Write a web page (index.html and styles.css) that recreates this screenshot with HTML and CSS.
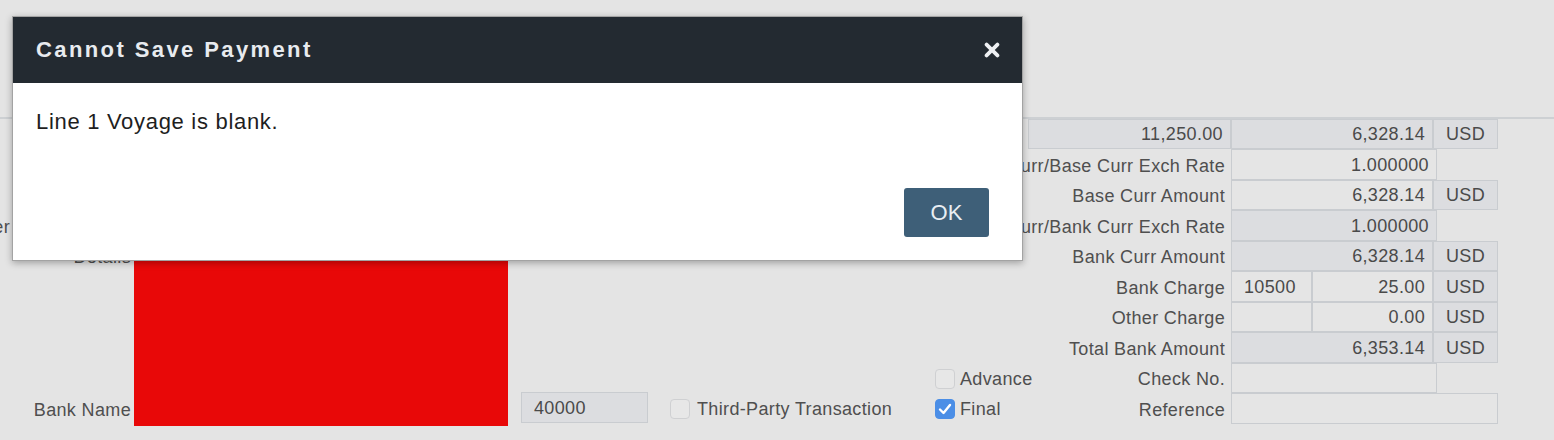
FILE: index.html
```html
<!DOCTYPE html>
<html lang="en">
<head>
<meta charset="utf-8">
<title>Payment</title>
<link rel="stylesheet" href="styles.css">
</head>
<body>
<div class="page">
  <div class="topbar"></div>
  <div class="form">
    <!-- row 1 -->
    <div class="cell ro num r1 c6">11,250.00</div>
    <div class="cell ro num r1 c78">6,328.14</div>
    <div class="cell ro cur r1 c9">USD</div>
    <!-- row 2 -->
    <div class="label r2 c6"><span>Payment Curr/Base Curr Exch Rate</span></div>
    <div class="cell num r2 c78 wide">1.000000</div>
    <!-- row 3 -->
    <div class="label r3 c6"><span>Base Curr Amount</span></div>
    <div class="cell num r3 c78">6,328.14</div>
    <div class="cell ro cur r3 c9">USD</div>
    <!-- row 4 -->
    <div class="llabel r4 c1"><span class="clip"><span>Voucher</span></span></div>
    <div class="label r4 c6"><span>Base Curr/Bank Curr Exch Rate</span></div>
    <div class="cell ro num r4 c78 wide">1.000000</div>
    <!-- row 5 -->
    <div class="label left r5 c1"><span>Details</span></div>
    <div class="label r5 c6"><span>Bank Curr Amount</span></div>
    <div class="cell ro num r5 c78">6,328.14</div>
    <div class="cell ro cur r5 c9">USD</div>
    <!-- row 6 -->
    <div class="label r6 c6"><span>Bank Charge</span></div>
    <div class="cell txt r6 c7">10500</div>
    <div class="cell num r6 c8">25.00</div>
    <div class="cell ro cur r6 c9">USD</div>
    <!-- row 7 -->
    <div class="label r7 c6"><span>Other Charge</span></div>
    <div class="cell txt r7 c7"></div>
    <div class="cell num r7 c8">0.00</div>
    <div class="cell ro cur r7 c9">USD</div>
    <!-- row 8 -->
    <div class="label r8 c6"><span>Total Bank Amount</span></div>
    <div class="cell ro num r8 c78">6,353.14</div>
    <div class="cell ro cur r8 c9">USD</div>
    <!-- row 9 -->
    <label class="check r9 c5"><span class="box"></span>Advance</label>
    <div class="label r9 c6"><span>Check No.</span></div>
    <div class="cell txt r9 c78 wide"></div>
    <!-- row 10 -->
    <div class="label left r10 c1"><span>Bank Name</span></div>
    <div class="cell ro txt r10 c3 bankcode">40000</div>
    <label class="check r10 c4 third"><span class="box"></span>Third-Party Transaction</label>
    <label class="check r10 c5"><span class="box on"><svg width="20" height="20" viewBox="0 0 20 20"><path d="M5 10.5l3.5 3.5L15 6" fill="none" stroke="#fff" stroke-width="2.4" stroke-linecap="round" stroke-linejoin="round"/></svg></span>Final</label>
    <div class="label r10 c6"><span>Reference</span></div>
    <div class="cell txt r10 c79"></div>
    <!-- redacted field -->
    <div class="redact"></div>
  </div>

  <div class="modal">
    <div class="modal-head">
      <span class="modal-title">Cannot Save Payment</span>
      <svg class="close" width="16" height="16" viewBox="0 0 16 16"><path d="M2.6 2.6L13.4 13.4M13.4 2.6L2.6 13.4" stroke="#eef0f3" stroke-width="3.8" stroke-linecap="round"/></svg>
    </div>
    <div class="modal-body">
      <p class="msg">Line 1 Voyage is blank.</p>
      <button class="ok">OK</button>
    </div>
  </div>
</div>
</body>
</html>
```

FILE: styles.css
```css
html, body {
  margin: 0;
  padding: 0;
}
body {
  background: #e4e4e4;
  font-family: "Liberation Sans", Arial, sans-serif;
  color: #4f4f4f;
  width: 1554px;
  height: 440px;
  overflow: hidden;
}
.page {
  position: relative;
  height: 440px;
}
.topbar {
  height: 117px;
  border-bottom: 2px solid #cdd0d3;
}
.form {
  display: grid;
  grid-template-columns: 134px 374px 140px 287px 93px 203px 81px 121px 65px;
  grid-template-rows: 30px 31px 30px 31px 30px 31px 30px 31px 30px 31px;
  font-size: 18px;
  letter-spacing: 0.35px;
}
.r1 { grid-row: 1; }
.r2 { grid-row: 2; }
.r3 { grid-row: 3; }
.r4 { grid-row: 4; }
.r5 { grid-row: 5; }
.r6 { grid-row: 6; }
.r7 { grid-row: 7; }
.r8 { grid-row: 8; }
.r9 { grid-row: 9; }
.r10 { grid-row: 10; }
.c1 { grid-column: 1; }
.c3 { grid-column: 3; }
.c4 { grid-column: 4; }
.c5 { grid-column: 5; }
.c6 { grid-column: 6; }
.c7 { grid-column: 7; }
.c8 { grid-column: 8; }
.c9 { grid-column: 9; }
.c78 { grid-column: 7 / 9; }
.c79 { grid-column: 7 / 10; }

.cell {
  box-sizing: border-box;
  border: 1px solid #c9ccd0;
  background: #e5e5e5;
  display: flex;
  align-items: center;
  padding-top: 1px;
  color: #4a4a4a;
  white-space: nowrap;
}
.cell.ro { background: #dcdde0; }
.cell.num { justify-content: flex-end; padding-right: 7px; }
.cell.txt { padding-left: 12px; }
.cell.cur { justify-content: center; }
.cell.wide { margin-right: -4px; }

.label {
  display: flex;
  align-items: center;
  justify-content: flex-end;
  padding-right: 6px;
  padding-top: 3px;
  white-space: nowrap;
  min-width: 0;
}
.label.left { padding-right: 3px; }
.llabel {
  display: flex;
  align-items: center;
  padding-top: 3px;
}
.clip {
  width: 10px;
  display: flex;
  justify-content: flex-end;
  white-space: nowrap;
}

.bankcode {
  margin-left: 13px;
  margin-top: -1px;
  margin-bottom: 1px;
  padding-left: 7px;
}

.check {
  display: flex;
  align-items: center;
  gap: 5px;
  white-space: nowrap;
}
.check.third { padding-left: 22px; gap: 7px; padding-top: 2px; }
.check.third .box { margin-top: -2px; }
.box {
  box-sizing: border-box;
  width: 20px;
  height: 20px;
  border: 1px solid #cfd0d2;
  border-radius: 4px;
  background: #e7e7e7;
  flex: none;
  display: flex;
}
.box.on {
  background: #4b8ee6;
  border-color: #4b8ee6;
}
.box.on svg { margin: -1px; }
.r9.check { padding-top: 3px; }
.r9.check .box { margin-top: -2px; }
.r10.c5.check { padding-top: 2px; }
.r10.c5.check .box { margin-top: -2px; }

.redact {
  grid-column: 2;
  grid-row: 5 / 11;
  background: #e80808;
  margin-top: 18px;
  margin-bottom: -2px;
}

.modal {
  position: absolute;
  left: 12px;
  top: 16px;
  width: 1011px;
  box-sizing: border-box;
  border: 1px solid #a3a3a3;
  background: #fff;
  box-shadow: 0 2px 7px rgba(0, 0, 0, 0.3);
}
.modal-head {
  height: 66px;
  background: #232a31;
  display: flex;
  align-items: center;
  justify-content: space-between;
  padding: 0 22px 0 23px;
}
.modal-title {
  font-weight: bold;
  font-size: 22px;
  letter-spacing: 2.4px;
  color: #e8ebef;
}
.close { display: block; }
.modal-body {
  display: flex;
  flex-direction: column;
  padding: 26px 33px 23px 23px;
}
.msg {
  margin: 0;
  font-size: 22px;
  line-height: 25px;
  letter-spacing: 0.7px;
  color: #1e1e1e;
}
.ok {
  align-self: flex-end;
  margin-top: 54px;
  width: 85px;
  height: 49px;
  border: none;
  border-radius: 3px;
  background: #3e5f78;
  color: #e8eef3;
  font-family: "Liberation Sans", Arial, sans-serif;
  font-size: 22px;
  padding: 0;
}
```
